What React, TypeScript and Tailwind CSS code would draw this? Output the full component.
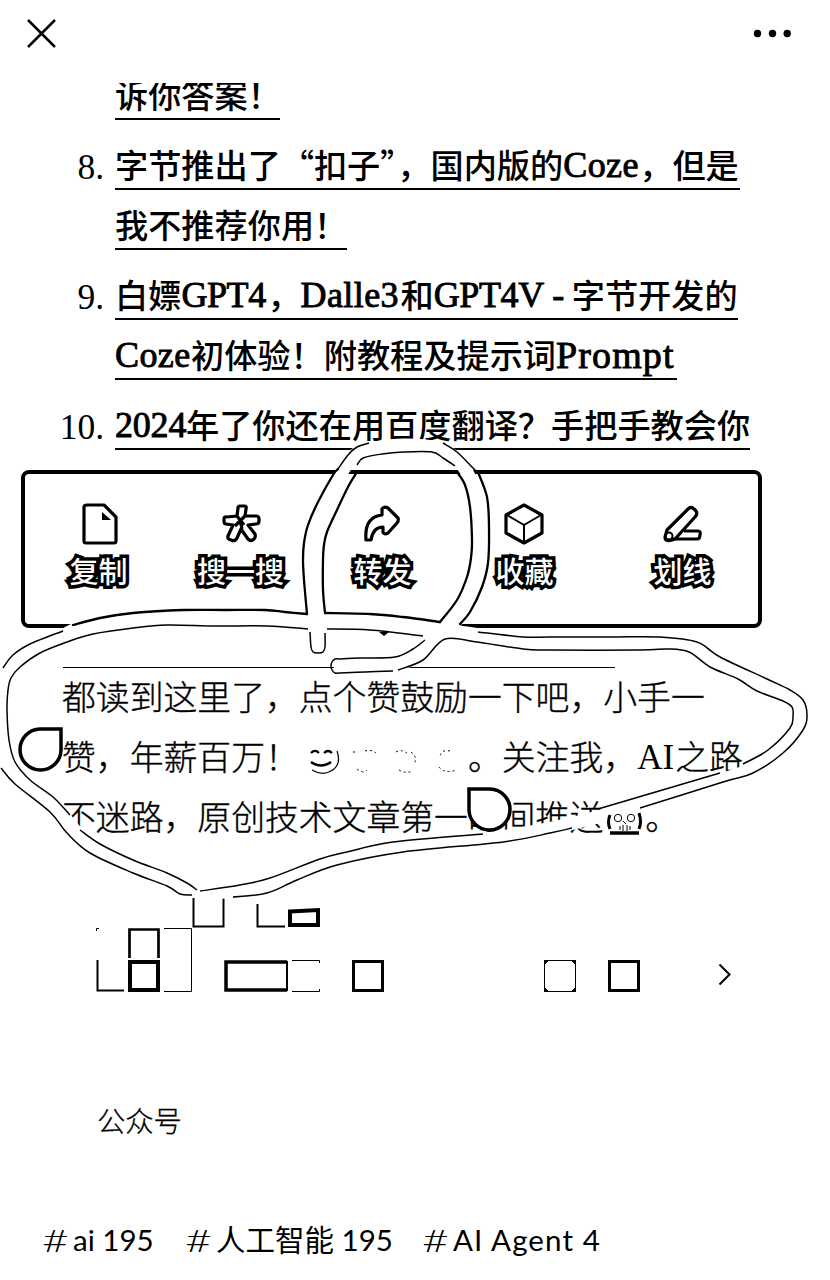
import React from "react";

const cjk = "font-['Noto_Sans_CJK_SC',sans-serif]";
const latin = "font-['Liberation_Serif','Noto_Sans_CJK_SC',serif]";
const tagFont = "font-['Lato','Noto_Sans_CJK_SC',sans-serif]";

function En({ children, className = "" }: { children: React.ReactNode; className?: string }) {
  return (
    <span className={`${latin} inline-block text-[36px] leading-[47px] font-normal [-webkit-text-stroke:0.9px_black] ${className}`}>
      {children}
    </span>
  );
}

function LinkLine({ num, width, children }: { num?: string; width: string; children: React.ReactNode }) {
  return (
    <div className="flex h-12">
      <span className={`w-[105px] shrink-0 pr-[1px] text-right text-[35.5px] leading-[50px] ${latin}`}>{num}</span>
      <span className={`ml-[10px] flex h-12 border-b-2 border-black text-[33.2px] leading-[44px] font-medium whitespace-nowrap ${width}`}>
        {children}
      </span>
    </div>
  );
}

function Action({ label, children }: { label: string; children: React.ReactNode }) {
  return (
    <div className="flex w-[142px] flex-col items-center">
      <svg width="48" height="48" viewBox="0 0 48 48" fill="none" stroke="black" strokeWidth="3.2" strokeLinejoin="round">
        {children}
      </svg>
      <span className="mr-[3px] text-[29px] leading-[44px] font-medium whitespace-nowrap text-white [-webkit-text-stroke:7px_black] [paint-order:stroke_fill]">
        {label}
      </span>
    </div>
  );
}

type Point = [number, number];

function curve(text: string): string {
  const p: Point[] = text.split(" ").map((pair) => pair.split(",").map(Number) as Point);
  let d = `M${p[0][0]} ${p[0][1]}`;
  for (let i = 0; i < p.length - 1; i++) {
    const a = p[Math.max(i - 1, 0)];
    const b = p[i];
    const c = p[i + 1];
    const e = p[Math.min(i + 2, p.length - 1)];
    d += ` C${b[0] + (c[0] - a[0]) / 6} ${b[1] + (c[1] - a[1]) / 6} ${c[0] - (e[0] - b[0]) / 6} ${c[1] - (e[1] - b[1]) / 6} ${c[0]} ${c[1]}`;
  }
  return d;
}

const masks = [
  "318,645 315,600 313,543 319,515 333,488 350,460 366,450 403,445 440,449 462,465 475,492 480,530 478,570 467,605 450,628 425,653 395,664 340,666",
  "318,622 270,618 180,617 100,621 55,640 15,665 2,700 0,735 5,765 22,782 60,813 90,845 140,867 190,889 230,892 268,885 300,871 340,857 400,847 500,837 590,819 730,777 762,763 785,743 799,726 800,713 797,700 780,693 745,681 715,662 695,647 675,643 550,643 440,630 318,622",
];

const heavyLines = [
  "338,469 333,475 318,502 308,525 304,543 303,560 304,580 307,614",
  "357,472 348,487 337,510 327,532 324,545 323,560 323,590 325,613",
  "325,613 370,614 403,617 440,622",
  "440,622 457,600 467,577 471,558 472,540 470,507 465,485 457,472",
  "478,472 487,497 489,527 488,563 482,587 470,612 460,624",
  "73,625 100,618 133,613 183,610 225,610 265,610 285,612 307,614",
];

const fineLines = [
  "338,469 348,455 357,447 369,443",
  "443,443 457,452 473,468 478,473",
  "357,465 363,458 382,454 403,452 432,452 443,458 455,466",
  "310,632 311,647 313,652 318,653 323,652 325,647 325,633",
  "425,640 413,649 395,657 360,658 340,659",
  "340,659 335,659 332,662 331,666 332,670 335,673 340,673",
  "340,673 365,672 393,671",
  "398,670 423,660 445,639 477,642 523,649 550,650 640,650 667,649 689,652 710,667 738,679 757,691 783,701 792,707 793,716 790,728 768,750 743,764",
  "3,668 13,655 30,644 63,631",
  "308,629 267,626 215,626 167,625 133,628 93,634 67,642 40,653 20,667 11,678 8,690 7,710 9,740 15,762 30,780 53,797 70,815",
  "327,629 370,630 423,636",
  "478,632 523,637 550,637 610,637 660,637 697,642 720,657 767,679 790,690 803,700 807,715 803,730 783,753 753,773 723,782 640,808",
  "720,773 598,809",
  "572,828 550,833 503,842 403,852 337,865 297,880 267,893 233,897",
  "483,834 393,842 347,852 320,859 270,878 240,885 200,891",
  "80,830 100,844 133,860 167,873 187,883 197,890",
  "1,768 15,784 50,812 67,833 90,853 133,873 167,886 180,894 192,895",
];

function Tag({ children, className = "" }: { children: React.ReactNode; className?: string }) {
  return (
    <div className={`flex ${className}`}>
      <span className="w-[31px]">
        <span className="inline-block origin-left scale-x-150 text-[31px] font-light">#</span>
      </span>
      <span>{children}</span>
    </div>
  );
}

export default function App() {
  return (
    <div className={`relative flex h-[1280px] w-[830px] flex-col overflow-hidden bg-white text-black ${cjk}`}>
      <header className="flex h-[83px] shrink-0 justify-between pt-[18px] pr-[38px] pl-[26px]">
        <svg width="32" height="32" viewBox="0 0 32 32" stroke="black" strokeWidth="2.5">
          <path d="M2 2 L29 29 M29 2 L2 29" />
        </svg>
        <svg width="40" height="32" viewBox="0 0 40 32">
          <circle cx="5.5" cy="15.5" r="3.7" />
          <circle cx="20.5" cy="15.5" r="3.7" />
          <circle cx="35.2" cy="15.5" r="3.7" />
        </svg>
      </header>

      <section className="flex shrink-0 flex-col overflow-hidden">
        <div className="-mt-[11px]">
          <LinkLine width="w-[165px]">诉你答案！</LinkLine>
        </div>
        <div className="mt-[22px] flex flex-col gap-3">
          <LinkLine num="8." width="w-[625px]">
            <span>字节推出了</span>
            <span className="w-[33px] text-right">“</span>
            <span>扣子</span>
            <span className="w-[17px]">”</span>
            <span>，国内版的</span>
            <En className="w-[76px] tracking-[0.4px]">Coze</En>
            <span>，但是</span>
          </LinkLine>
          <LinkLine width="w-[232px]">我不推荐你用！</LinkLine>
        </div>
        <div className="mt-[22px] flex flex-col gap-3">
          <LinkLine num="9." width="w-[623px]">
            <span>白嫖</span>
            <En className="w-[86px] tracking-[-0.4px]">GPT4</En>
            <span>，</span>
            <En className="w-[100px] tracking-[0.4px]">Dalle3</En>
            <span>和</span>
            <En className="w-[111px] tracking-[-0.4px]">GPT4V</En>
            <En className="w-[27px] text-center">-</En>
            <span>字节开发的</span>
          </LinkLine>
          <LinkLine width="w-[562px]">
            <En className="w-[76px] tracking-[0.4px]">Coze</En>
            <span>初体验！附教程及提示词</span>
            <En className="w-[120px] tracking-[1.1px] text-[38px]">Prompt</En>
          </LinkLine>
        </div>
        <div className="mt-[22px]">
          <LinkLine num="10." width="w-[635px]">
            <En className="w-[71px] tracking-[-0.2px]">2024</En>
            <span>年了你还在用百度翻译？手把手教会你</span>
          </LinkLine>
        </div>
      </section>

      <nav className="mt-5 ml-[21px] flex h-[158px] w-[741px] shrink-0 rounded-lg border-4 border-black pt-[26px] pl-[4px]">
        <Action label="复制">
          <path d="M11 5 H28 L40 17 V41 Q40 43 38 43 H10 Q8 43 8 41 V7 Q8 5 11 5 Z" />
          <path d="M26 12 L35 20 H26 Z" fill="black" stroke="none" />
        </Action>
        <Action label="搜一搜">
          <path d="M19 16 L20 8 Q20 6 22 6 H26 Q29 6 28 9 L27 16 H38 Q41 16 41 19 V21 Q41 24 38 24 L30 25 L37 34 Q38 37 36 39 Q33 42 30 39 L23 29 L19 38 Q17 42 13 40 Q9 39 10 36 L15 25 L8 24 Q6 24 6 21 V19 Q6 16 9 17 Z M19 16 L26 25 M27 16 L17 26 M22 20 L24 29" />
        </Action>
        <Action label="转发">
          <path d="M6 40 Q4 17 22 15 V9 Q24 6 28 8 L38 18 Q39 20 37 23 L28 33 Q24 35 23 32 V27 Q13 27 11 40 Z" />
        </Action>
        <Action label="收藏">
          <path d="M22 5 L40 15 V33 L22 43 L4 33 V15 Z" />
          <path d="M5 15 L22 25 L39 15 M22 25 V42" strokeWidth="2" />
        </Action>
        <div className="ml-4">
          <Action label="划线">
            <path d="M7 30 L28 9 Q31 6 34 9 L36 11 Q38 14 35 17 L15 39 Q5 43 5 37 Z M24 31 H38 Q41 31 40 35 Q40 39 37 39 H11" />
            <circle cx="9" cy="36" r="3.500" strokeWidth="2" />
          </Action>
        </div>
      </nav>

      <main className="mt-[39px] ml-[62px] shrink-0 text-[33.85px] leading-[58px] font-light whitespace-nowrap [-webkit-text-stroke:0.35px_black]">
        <hr className="-mb-px ml-px w-[552px] border-black" />
        <p className="flex h-[60px]">都读到这里了，点个赞鼓励一下吧，小手一</p>
        <p className="flex h-[60px]">
          <span className="w-[239px]">赞，年薪百万！</span>
          <svg width="167" height="60" viewBox="0 0 167 60" fill="none" stroke="black">
            <path d="M10 26 Q14 22 18 26 M23 26 Q27 22 31 26" strokeWidth="2.2" />
            <path d="M10 35 Q20 42 30 35" strokeWidth="2.5" />
            <path d="M36 24 Q41 38 30 44 Q21 49 11 43" strokeWidth="1.2" />
            <path
              d="M52 25 H56 M64 24 Q70 22 75 26 M56 42 Q62 47 66 43 M95 25 Q100 22 106 26 M110 25 Q117 30 113 37 M98 43 Q104 47 112 44 M149 24 Q141 22 139 29 M138 40 Q143 47 156 43"
              strokeDasharray="2 3"
            />
          </svg>
          <span>。关注我，</span>
          <span className={`${latin} w-[38px] text-[35px] leading-[61px] [-webkit-text-stroke:0px]`}>AI</span>
          <span>之路</span>
        </p>
        <p className="flex h-[60px]">
          <span>不迷路，原创技术文章第一时间推送</span>
          <svg className="relative z-10" width="42" height="60" viewBox="0 0 42 60" fill="none" stroke="black">
            <path d="M7 28 Q4 35 7 42 M36 26 Q39 35 36 42" strokeWidth="3" />
            <circle cx="15" cy="31" r="3.7" />
            <circle cx="28" cy="31" r="3.7" />
            <path d="M20 34 L23 37 M20 38 V44 M24 38 V44 M17 39 V43 M27 39 V43" />
            <path d="M7 46 H36" strokeWidth="3.5" />
          </svg>
          <span>。</span>
        </p>
      </main>

      <section className="mt-[49px] ml-[96px] h-[98px] shrink-0">
        <svg width="660" height="98" viewBox="96 896 660 98" fill="none" stroke="black">
          <path d="M193.5 898 V926.5 H223.5 V898 M257.5 904 V926.5 H285 M97.5 960 V990.5 H124" strokeWidth="2" />
          <path d="M290 911.5 L318 910 V925 H290 Z" strokeWidth="4" />
          <path d="M96.5 931 V928.5 H99" />
          <path d="M129.5 958 V929.5 H158.5 V958" strokeWidth="2.7" />
          <path d="M164 928.5 H191.5 V991.5 H164 M292 960.5 H319.5 V963 M292 991.5 H319.5 V989" />
          <rect x="130" y="962" width="28" height="28" strokeWidth="4" />
          <path d="M287 962 H226 V990 H287" strokeWidth="3.5" />
          <path d="M287 961 V991" strokeWidth="2" />
          <rect x="353.5" y="961.5" width="29" height="29" strokeWidth="3" />
          <rect x="544.5" y="960.5" width="31" height="31" />
          <path d="M545 961 h3 l-3 3 z M575 961 h-3 l3 3 z M545 991 h3 l-3 -3 z M575 991 h-3 l3 -3 z" fill="black" />
          <rect x="609.5" y="961.5" width="29" height="29" strokeWidth="3" />
          <path d="M719.5 964.5 L729.5 974.5 L719.5 984.5" strokeWidth="2" />
        </svg>
      </section>

      <p className="mt-[106px] ml-[97px] shrink-0 text-[28.3px] leading-[40px] font-light [-webkit-text-stroke:0.3px_black]">公众号</p>

      <footer className={`mt-[80px] ml-[42px] flex shrink-0 text-[29.5px] leading-[40px] whitespace-nowrap ${tagFont}`}>
        <Tag className="w-[143px]">ai 195</Tag>
        <Tag className="w-[237px]">人工智能 195</Tag>
        <Tag className="tracking-[1.1px]">AI Agent 4</Tag>
      </footer>

      <svg className="pointer-events-none absolute inset-0" width="830" height="1280" viewBox="0 0 830 1280" fill="none">
        {masks.map((m) => (
          <path key={m} d={curve(m)} stroke="white" strokeWidth="13" strokeLinecap="round" strokeLinejoin="round" />
        ))}
        <path d="M76 627 H459" stroke="white" strokeWidth="6" />
        {heavyLines.map((l) => (
          <path key={l} d={curve(l)} stroke="black" strokeWidth="2.3" strokeLinecap="round" />
        ))}
        {fineLines.map((l) => (
          <path key={l} d={curve(l)} stroke="black" strokeWidth="1.5" />
        ))}
        <path d="M356 472 H458" stroke="black" strokeWidth="4" />
        <path d="M379 632 H389 L384 636 Z" fill="black" />
        <path d="M61 729 H40 A20.5 20.5 0 1 0 61 750 Z" fill="white" stroke="black" strokeWidth="3.5" />
        <path d="M469 789 H490 A20.5 20.5 0 1 1 469 810 Z" fill="white" stroke="black" strokeWidth="3.5" />
      </svg>
    </div>
  );
}
